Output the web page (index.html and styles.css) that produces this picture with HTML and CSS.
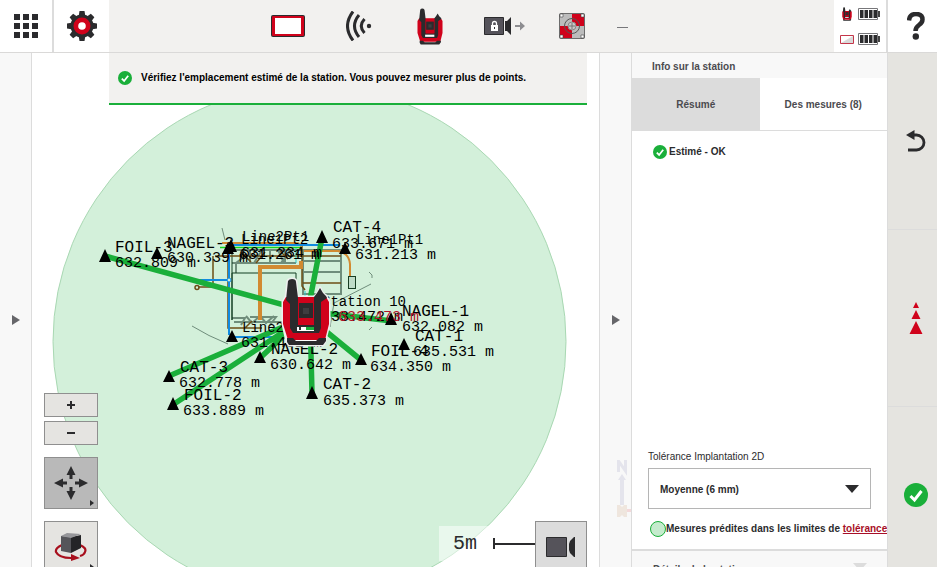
FILE: index.html
```html
<!DOCTYPE html>
<html lang="fr">
<head>
<meta charset="utf-8">
<meta name="viewport" content="width=device-width, initial-scale=1">
<title>Info sur la station</title>
<link rel="stylesheet" href="styles.css">
</head>
<body>
<svg class="defs" aria-hidden="true">
  <symbol id="station" viewBox="0 0 46 68">
    <path fill="#d0021b" d="M0 24 3 19H43L46 24V46L42 62H5L0 46Z"/>
    <path fill="#2b2b2d" d="M5 3Q6 1 9 1 13 1 13 4L15 20V46H31V19L34 15 37 10 40 15 43 18 44 20 38 24V50L36 55H10L7 50V26L3 22Z"/>
    <path fill="#d0021b" d="M15 20H31V47H15Z"/>
    <path fill="#2b2b2d" d="M16 25H30V40H16Z"/>
    <path fill="#3d3d40" d="M20 30h6v6h-6z"/>
    <path fill="#fff" d="M14 49H31V53H14Z"/>
    <path fill="#2b2b2d" d="M4 60H10L13 63H33L36 60H43V63L40 67H6L4 64Z"/>
  </symbol>
  <symbol id="check" viewBox="0 0 24 24">
    <circle cx="12" cy="12" r="12" fill="#1aaf3a"/>
    <path d="m6.500 13 4 4 7-9" fill="none" stroke="#fff" stroke-width="3"/>
  </symbol>
  <symbol id="battery" viewBox="0 0 22 12">
    <path d="M.5.5h19v11H.500z" fill="#fff" stroke="#77777a"/>
    <path d="M20 3h2v6h-2z" fill="#444"/>
    <path d="M2 2h3.500v8H2zM6.500 2H10v8H6.500zM11 2h3.500v8H11zM15.500 2H19v8h-3.500z" fill="#2b2b2d"/>
  </symbol>
</svg>

<header class="topbar">
  <button class="top-button" aria-label="Menu">
    <svg width="24" height="24" viewBox="0 0 24 24" fill="#2b2b2d"><path d="M0 0h6v6H0zM9 0h6v6H9zM18 0h6v6h-6zM0 9h6v6H0zM9 9h6v6H9zM18 9h6v6h-6zM0 18h6v6H0zM9 18h6v6H9zM18 18h6v6h-6z"/></svg>
  </button>
  <button class="top-button top-button-gear" aria-label="Réglages">
    <svg width="30" height="30" viewBox="-15 -15 30 30">
      <g fill="#2b2b2d">
        <circle r="11.500"/>
        <path d="M-2.500-15h5l1 6h-7zM-2.500 15h5l1-6h-7zM-15-2.500v5l6 1v-7zM15-2.500v5l-6 1v-7z"/>
        <path transform="rotate(45)" d="M-2.500-15h5l1 6h-7zM-2.500 15h5l1-6h-7zM-15-2.500v5l6 1v-7zM15-2.500v5l-6 1v-7z"/>
      </g>
      <circle r="8.500" fill="#d0021b"/><circle r="3.800" fill="#fff"/>
    </svg>
  </button>
  <div class="status">
    <span class="status-item">
      <svg width="34" height="22" viewBox="0 0 34 22"><rect width="34" height="22" rx="2" fill="#2b2b2d"/><rect x="1" y="1" width="32" height="20" rx="1" fill="#d0021b"/><path fill="#fff" d="M4 3h26v16H4z"/></svg>
    </span>
    <span class="status-item">
      <svg width="26" height="30" viewBox="0 0 26 30" fill="none" stroke="#2b2b2d" stroke-width="3"><path d="M7 .5Q-4 15 7 29.500M13 4Q4 15 13 26M18.500 8Q12 15 18.500 22"/><circle cx="23" cy="15" r="2.200" fill="#2b2b2d" stroke="none"/></svg>
    </span>
    <span class="status-item"><svg width="26" height="37"><use href="#station"/></svg></span>
    <span class="status-item">
      <svg width="50" height="20" viewBox="0 0 50 20"><path d="M8.500 1.500h19v17h-19z" fill="#55535a" stroke="#2b2b2d"/><path d="M35 1v18l-4-4h-2V5h2z" fill="#2b2b2d"/><path d="M15 9h7v6h-7z" fill="#fff"/><path d="M16.500 9V7.500a2 2 0 0 1 4 0V9" fill="none" stroke="#fff" stroke-width="1.300"/><path d="M18 11h1v2h-1z" fill="#333"/><path d="M39 9h5V5.500l5 4.500-5 4.500V11h-5z" fill="#8d8d90"/></svg>
    </span>
    <span class="status-item">
      <svg width="26" height="26" viewBox="0 0 26 26"><rect x=".5" y=".5" width="25" height="25" rx="1" fill="#bcbcbc" stroke="#6c6c6c"/><path d="M13 1h12v12H13zM1 13h12v12H1z" fill="#d0021b"/><circle cx="13" cy="13" r="4" fill="#c9c9c9"/><g fill="none" stroke="#555"><circle cx="13" cy="13" r="7.500"/><circle cx="13" cy="13" r="4" stroke="#888"/><path d="M10 13h6M13 10v6" stroke="#777"/></g><path d="M1 1h3v3H1zM22 1h3v3h-3zM1 22h3v3H1zM22 22h3v3h-3z" fill="#fff" stroke="#444" stroke-width=".6"/></svg>
    </span>
    <span class="status-item status-dash"><svg width="11" height="4"><path d="M0 3h11v1H0z" fill="#77777a"/></svg></span>
  </div>
  <div class="power">
    <span class="power-icon"><svg width="10" height="14"><use href="#station"/></svg></span>
    <svg width="22" height="12"><use href="#battery"/></svg>
    <span class="power-icon"><svg width="14" height="9" viewBox="0 0 14 9"><path d="M.5.5h13v8H.500z" fill="#fff"/><path d="M1 8 13 1v7z" fill="#d9d9d9"/><path d="M.5.5h13v8H.500z" fill="none" stroke="#c4364a"/></svg></span>
    <svg width="22" height="12"><use href="#battery"/></svg>
  </div>
  <button class="top-button top-button-help" aria-label="Aide">
    <svg width="18" height="28" viewBox="0 0 18 28"><path d="M2 8.500Q2.500 2 9 2q6.500 0 6.500 5.500 0 3-3.500 5.500-3.500 2.500-3.500 6" fill="none" stroke="#2b2b2d" stroke-width="4.500"/><circle cx="8.800" cy="24.500" r="3.200" fill="#2b2b2d"/></svg>
  </button>
</header>

<main class="workspace">
  <button class="rail" aria-label="Ouvrir le volet gauche"><svg width="8" height="10"><path d="M0 0 8 5 0 10z" fill="#66666a"/></svg></button>

  <section class="map" aria-label="Plan">
    <svg class="map-canvas" viewBox="32 53 567 514" preserveAspectRatio="xMidYMin slice">
      <circle cx="309.500" cy="341.500" r="256.500" fill="#d3f0da" stroke="#a9d8b3" stroke-width="1"/>
      <g fill="none" stroke="#6f8d7b">
        <path d="M222 228l3 12M192 326q16 10 36 18M371 284 334 303 330 327M369 272l3 3v3M372 327l-3 3" />
        <path d="M232 250H341V294H303V250M303 261H341M303 272H341M232 263H296M250 250V263M270 250V263M285 250V263M236 273V263l9-7M262 250l-8 13M278 250l6 13M290 250l-9 13M232 318H245L241 325M250 317h26l-6 8M303 294V274M234 322H283M246 316l6 7 8-7 6 7 8-7" stroke-width="2"/>
      </g>
      <g fill="none">
        <path d="M232 320V273H296V290M232 250V320" stroke="#123f22"/>
        <path d="M215 256H341M213 256V287H198M303 283H341M228 249V328H262M245 328l7-7M302 246V286l3 4" stroke="#6d4d16" stroke-width="1.500"/>
        <circle cx="197" cy="287.500" r="2" stroke="#6d4d16" stroke-width="1.500"/>
        <path d="M241 252l10 10M256 263l9-11M280 251l8 8" stroke="#6d4d16" stroke-width="1.500"/>
        <path d="M260 320V267H301V261" stroke="#d28a31" stroke-width="4"/>
        <path d="M222 243H296Q301 243 302 249M304 251H338Q349 253 350 264V276" stroke="#d28a31" stroke-width="2"/>
        <path d="M228 245H339M229 246V335M231 337H285" stroke="#118be0" stroke-width="2"/>
        <path d="M197 280H229" stroke="#118be0" stroke-width="2"/>
        <circle cx="229" cy="280" r="2" fill="#d3f0da" stroke="#118be0"/>
        <path d="M220 247.500H301" stroke="#14d51c" stroke-width="1.500"/>
        <path d="M296 248v15M305 291v5" stroke="#27c9c9"/>
        <rect x="348.500" y="276.500" width="7" height="12" fill="#bfdcc8" stroke="#173d23"/>
      </g>
      <g stroke="#1aaf3a" stroke-width="5.500">
        <path d="M306 311 105 256M306 317 169 376M306 317 174 404M306 315 260 358M310 315 312 393M306 315 361 360M306 311 392 321M307 315 322 238"/>
      </g>
      <g fill="#000">
        <path d="M105 249l6 13H99zM157 247l6 12h-12zM231 239l6 13h-12zM228 242l6 12h-12zM322 230l6 13h-12zM345 242l6 12h-12zM232 330l6 12h-12zM391 312l6 13h-12zM404 338l6 12h-12zM361 353l6 12h-12zM260 351l6 12h-12zM312 386l6 13h-12zM169 370l6 12h-12zM173 397l6 13h-12z"/>
      </g>
      <g class="point-name">
        <text x="115" y="252">FOIL-3</text><text x="167" y="248">NAGEL-3</text>
        <text x="333" y="232">CAT-4</text><text x="402" y="316">NAGEL-1</text>
        <text x="415" y="341">CAT-1</text><text x="371" y="356">FOIL-4</text>
        <text x="271" y="354">NAGEL-2</text><text x="180" y="372">CAT-3</text>
        <text x="184" y="400">FOIL-2</text><text x="323" y="389">CAT-2</text>
      </g>
      <g class="line-name">
        <text x="242" y="241">Line2Pt1</text><text x="241" y="244">Line1Pt2</text>
        <text x="356" y="244">Line1Pt1</text><text x="322" y="306">Station 10</text>
        <text x="242" y="332">Line2Pt2</text>
      </g>
      <g class="point-height">
        <text x="115" y="267">632.809 m</text><text x="167" y="262">630.339 m</text>
        <text x="241" y="257">631.234 m</text><text x="239" y="259">631.261 m</text>
        <text x="332" y="248">633.671 m</text><text x="355" y="259">631.213 m</text>
        <text x="322" y="321">633.472 m</text>
        <text x="402" y="331">632.082 m</text><text x="413" y="356">635.531 m</text>
        <text x="370" y="371">634.350 m</text><text x="270" y="369">630.642 m</text>
        <text x="241" y="347">631.402 m</text><text x="179" y="387">632.778 m</text>
        <text x="183" y="415">633.889 m</text><text x="323" y="405">635.373 m</text>
        <text class="station-height" x="338" y="321">633.473 m</text>
      </g>
      <path d="M283 302 286 297 288 281Q289 279 292 279 296 279 296 282L297 297H315L318 293 320 288 322 293 326 296 329 302V324L325 340V341L323 345H289L287 342 283 324Z" fill="#fff" stroke="#efefef" stroke-width="3" stroke-linejoin="round"/>
      <use href="#station" x="283" y="278" width="46" height="68"/>
      <path d="M306 327h8v3h-8z" fill="#1aaf3a"/><path d="M299 327h2v3h-2z" fill="#333"/>
    </svg>

    <p class="banner"><svg width="14" height="14"><use href="#check"/></svg>Vérifiez l'emplacement estimé de la station. Vous pouvez mesurer plus de points.</p>

    <div class="tools">
      <div class="zoom-tools">
        <button class="tool tool-small" aria-label="Zoom avant"><svg width="8" height="8"><path d="M3 0h2v3h3v2H5v3H3V5H0V3h3z" fill="#2b2b2d"/></svg></button>
        <button class="tool tool-small" aria-label="Zoom arrière"><svg width="8" height="8"><path d="M0 3h8v2H0z" fill="#2b2b2d"/></svg></button>
      </div>
      <button class="tool tool-active" aria-label="Déplacer">
        <svg width="34" height="34" viewBox="-17 -17 34 34" fill="#2b2b2d"><path d="M0-17 4.500-8H1.500v4h-3v-4h-3zM0 17 4.500 8H1.500V4h-3v4h-3zM-17 0-8-4.500V-1.500h4v3h-4v3zM17 0 8-4.500V-1.500H4v3h4v3z"/></svg>
        <svg class="more" width="4" height="6"><path d="M0 0 4 3 0 6z" fill="#2b2b2d"/></svg>
      </button>
      <button class="tool" aria-label="Rotation 3D">
        <svg width="34" height="28" viewBox="0 0 34 28"><path d="M8 12Q1 15 2 19q3 6 15 6M26 12q7 3 5 7-1 3-5 4" fill="none" stroke="#a80f1d" stroke-width="2.200"/><path d="M17 21 26 25 17 28z" fill="#a80f1d"/><path d="M7 3 17 4v16L7 18z" fill="#55555a"/><path d="M17 4 27 2v13l-10 5z" fill="#242427"/><path d="M7 3 13 0l14 1-10 4z" fill="#96969a"/></svg>
        <svg class="more" width="4" height="6"><path d="M0 0 4 3 0 6z" fill="#2b2b2d"/></svg>
      </button>
    </div>

    <div class="scale">
      <div class="scale-label"><span>5m</span><span class="scale-line"></span></div>
      <button class="tool tool-camera" aria-label="Caméra"><svg width="30" height="20" viewBox="0 0 30 20"><path d="M.500.500h20v19H.500z" fill="#55535a" stroke="#2b2b2d"/><path d="M29 0v20h-1l-4-4-1-3V7l1-3 4-4z" fill="#2b2b2d"/></svg></button>
    </div>
  </section>

  <button class="rail rail-right" aria-label="Fermer le volet droit">
    <svg width="8" height="10"><path d="M0 0 8 5 0 10z" fill="#66666a"/></svg>
    <svg class="compass" width="14" height="57" viewBox="0 0 14 57"><path d="M1.500 12V1L8.500 11V0" fill="none" stroke="#e4e4ec" stroke-width="3"/><path d="M5 14 9 20H7V45H3V20H1z" fill="#e4e4ec"/><path d="M0 45h3l2 2 2-2h3v12H7l-2-2-2 2H0z" fill="#efe6de"/><path d="M10 49h4v3h-4z" fill="#f3d9da"/></svg>
  </button>

  <aside class="panel">
    <h2 class="panel-title">Info sur la station</h2>
    <div class="tabs" role="tablist">
      <button class="tab tab-current" role="tab" aria-selected="true">Résumé</button>
      <button class="tab" role="tab" aria-selected="false">Des mesures (8)</button>
    </div>
    <p class="result"><svg width="14" height="14"><use href="#check"/></svg>Estimé - OK</p>
    <div class="tolerance">
      <label for="tolerance">Tolérance Implantation 2D</label>
      <div class="select">
        <select id="tolerance"><option>Moyenne (6 mm)</option></select>
        <svg class="select-arrow" width="14" height="8"><path d="M0 0h14L7 8z" fill="#2b2b2d"/></svg>
      </div>
    </div>
    <p class="legend"><span class="legend-dot"></span><span>Mesures prédites dans les limites de <a href="#tolerance">tolérance</a></span></p>
    <button class="section">Détails de la station<svg width="14" height="8"><path d="M0 0h14L7 8z" fill="#dcdcdc"/></svg></button>
  </aside>

  <nav class="actions" aria-label="Actions">
    <button class="action" aria-label="Retour"><svg width="20" height="22" viewBox="0 0 20 22"><path d="M0 5 8.500 0v10z" fill="#2b2b2d"/><path d="M7 5h3.500a7.500 7.500 0 0 1 0 15H2" fill="none" stroke="#2b2b2d" stroke-width="2.800"/></svg></button>
    <button class="action" aria-label="Mesurer"><svg width="14" height="32" viewBox="0 0 14 32" fill="#d0021b"><path d="M7 0 10 6H4zM7 8l4.500 9h-9zM7 19l6.500 13H.500z"/></svg></button>
    <button class="action" aria-label="Valider"><svg width="24" height="24"><use href="#check"/></svg></button>
  </nav>
</main>
</body>
</html>
```
FILE: styles.css
```css
* { box-sizing: border-box; }

body {
  display: flex;
  flex-direction: column;
  height: 100vh;
  margin: 0;
  overflow: hidden;
  background: #fff;
  color: #2b2b2d;
  font: bold 10px/14px "Liberation Sans", Arial, sans-serif;
}

button {
  margin: 0;
  padding: 0;
  border: 0;
  background: none;
  color: inherit;
  font: inherit;
  cursor: pointer;
}

h2, p { margin: 0; font: inherit; }
svg { display: block; flex: none; }
.defs { position: absolute; width: 0; height: 0; }

/* Top bar */
.topbar {
  display: flex;
  flex: none;
  height: 53px;
  border-bottom: 1px solid #dad9d8;
}

.top-button {
  display: flex;
  flex: none;
  align-items: center;
  justify-content: center;
  width: 52px;
}

.top-button-gear { width: 57px; border-left: 2px solid #dcdcdc; }
.top-button-help { width: 51px; border-left: 2px solid #dcdcdc; padding-left: 6px; }

.status {
  display: flex;
  flex: 1;
  align-items: center;
  padding-left: 143px;
  background: #f2f1ef;
}

.status-item { display: flex; justify-content: center; width: 71px; }
.status-dash { width: 31px; }

.power {
  display: grid;
  grid-template-columns: 14px 22px;
  align-content: space-between;
  align-items: center;
  gap: 4px;
  padding: 7px 6px;
}

.power-icon { display: flex; justify-content: center; }

/* Work area */
.workspace { display: flex; flex: 1; min-height: 0; }

.rail {
  position: relative;
  display: flex;
  flex: none;
  align-items: center;
  justify-content: center;
  width: 32px;
  padding-top: 20px;
  border-right: 1px solid #dcdcdc;
  background: #f8f8f8;
}

.rail-right { width: 33px; border-left: 1px solid #dcdcdc; }
.compass { position: absolute; right: 0; bottom: 50px; }

.map { position: relative; flex: 1; min-width: 0; overflow: hidden; }
.map-canvas { position: absolute; inset: 0; width: 100%; height: 100%; }
.map text { font-family: "Liberation Mono", monospace; font-weight: normal; }
.point-name { font-size: 16px; }
.line-name { font-size: 14px; }
.point-height { font-size: 15px; }
.station-height { fill: #b01228; }

.banner {
  position: relative;
  display: flex;
  align-items: center;
  gap: 9px;
  height: 52px;
  margin: 0 12px 0 77px;
  padding-left: 9px;
  border-bottom: 2px solid #1aaf3a;
  background: #f2f1ef;
  color: #000;
}

.tools {
  position: absolute;
  bottom: -6px;
  left: 12px;
  display: flex;
  flex-direction: column;
  gap: 12px;
}

.zoom-tools { display: grid; gap: 4px; }

.tool {
  position: relative;
  display: flex;
  align-items: center;
  justify-content: center;
  width: 54px;
  height: 52px;
  border: 1px solid #8f8f8f;
  background: #e5e4e1;
}

.tool-small { height: 24px; }
.tool-active { background: #b9b9b9; }
.tool-camera { width: 52px; background: #dcdcdc; }
.more { position: absolute; right: 3px; bottom: 2px; }

.scale {
  position: absolute;
  right: 12px;
  bottom: -6px;
  display: flex;
}

.scale-label {
  display: flex;
  align-items: center;
  gap: 16px;
  height: 35px;
  margin-top: 5px;
  padding-left: 14px;
  background: rgba(255, 255, 255, .5);
  font: 20px/24px "Liberation Mono", monospace;
}

.scale-line {
  width: 42px;
  height: 11px;
  border-left: 2px solid #2b2b2d;
  background: linear-gradient(#2b2b2d, #2b2b2d) center / 100% 2px no-repeat;
}

/* Information panel */
.panel {
  display: flex;
  flex: none;
  flex-direction: column;
  width: 255px;
  overflow: hidden;
}

.panel-title {
  flex: none;
  height: 25px;
  padding: 7px 20px 4px;
  background: #f8f8f8;
  color: #4b4b4f;
}

.tabs { display: grid; flex: none; grid-template-columns: 1fr 1fr; height: 53px; border-bottom: 1px solid #dcdcdc; }
.tab { padding-top: 2px; color: #4b4b4f; }
.tab-current { background: #dcdcdc; }

.result {
  display: flex;
  flex: 1;
  align-items: flex-start;
  gap: 2px;
  padding: 14px 21px;
}

.tolerance { flex: none; padding: 0 16px; }
.tolerance label { display: block; margin-bottom: 4px; font-weight: normal; }
.select { position: relative; }

.select select {
  display: block;
  width: 100%;
  height: 41px;
  padding: 2px 11px 0;
  border: 1px solid #b5b5b5;
  border-radius: 0;
  appearance: none;
  background: #fff;
  color: inherit;
  font: inherit;
}

.select-arrow { position: absolute; top: 17px; right: 12px; pointer-events: none; }

.legend {
  display: flex;
  flex: none;
  align-items: center;
  padding: 12px 0 12px 18px;
  white-space: nowrap;
}

.legend-dot {
  flex: none;
  width: 16px;
  height: 16px;
  border: 1px solid #1aaf3a;
  border-radius: 50%;
  background: #c5ebcd;
}

.legend a { color: #a80f28; }

.section {
  display: flex;
  flex: none;
  align-items: flex-start;
  justify-content: space-between;
  height: 42px;
  margin-bottom: -24px;
  padding: 12px 20px 13px 21px;
  border-top: 2px solid #dcdcdc;
  background: #f8f8f8;
  color: #4b4b4f;
}

/* Action rail */
.actions {
  display: flex;
  flex: none;
  flex-direction: column;
  width: 50px;
  overflow: hidden;
  border-left: 1px solid #dcdcdc;
  background: #e5e4e0;
}

.action {
  display: flex;
  flex: none;
  align-items: center;
  justify-content: center;
  height: 177px;
  padding-left: 6px;
  border-bottom: 1px solid #dcdcdc;
}
```
